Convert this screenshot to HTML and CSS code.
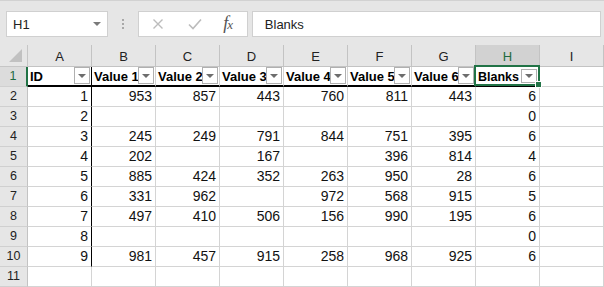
FILE: index.html
```html
<!DOCTYPE html>
<html>
<head>
<meta charset="utf-8">
<link rel="stylesheet" href="styles.css">
</head>
<body>
<div class="topbar">
  <div class="namebox"><span>H1</span><span class="dd"></span></div>
  <div class="grip"><i></i><i></i><i></i></div>
  <div class="fbtns">
    <svg class="ico" width="12" height="12" viewBox="0 0 12 12"><path d="M1.5 1.5 L10.5 10.5 M10.5 1.5 L1.5 10.5" stroke="#bcbcbc" stroke-width="1.4" fill="none"/></svg>
    <svg class="ico" width="14" height="12" viewBox="0 0 14 12"><path d="M1 6.5 L5 10.5 L13 1.5" stroke="#bcbcbc" stroke-width="1.6" fill="none"/></svg>
    <span class="fx">f<span>x</span></span>
  </div>
  <div class="formula">Blanks</div>
</div>
<div class="sheet">
  <div class="corner"><svg width="14" height="14" viewBox="0 0 14 14"><polygon points="13,0 13,13 0,13" fill="#c1c1c1"/></svg></div>
  <div class="ch">A</div><div class="ch">B</div><div class="ch">C</div><div class="ch">D</div><div class="ch">E</div><div class="ch">F</div><div class="ch">G</div><div class="ch on">H</div><div class="ch">I</div>

  <div class="rh on">1</div>
  <div class="c th ca"><span class="t">ID</span><span class="fb"></span></div>
  <div class="c th"><span class="t">Value 1</span><span class="fb"></span></div>
  <div class="c th"><span class="t">Value 2</span><span class="fb"></span></div>
  <div class="c th"><span class="t">Value 3</span><span class="fb"></span></div>
  <div class="c th"><span class="t">Value 4</span><span class="fb"></span></div>
  <div class="c th"><span class="t">Value 5</span><span class="fb"></span></div>
  <div class="c th"><span class="t">Value 6</span><span class="fb"></span></div>
  <div class="c th cur"><span class="t">Blanks</span><span class="fb"></span><span class="sel"><span class="handle"></span></span></div>
  <div class="c"></div>

  <div class="rh">2</div>
  <div class="c n ca">1</div><div class="c n">953</div><div class="c n">857</div><div class="c n">443</div><div class="c n">760</div><div class="c n">811</div><div class="c n">443</div><div class="c n">6</div><div class="c"></div>

  <div class="rh">3</div>
  <div class="c n ca">2</div><div class="c n"></div><div class="c n"></div><div class="c n"></div><div class="c n"></div><div class="c n"></div><div class="c n"></div><div class="c n">0</div><div class="c"></div>

  <div class="rh">4</div>
  <div class="c n ca">3</div><div class="c n">245</div><div class="c n">249</div><div class="c n">791</div><div class="c n">844</div><div class="c n">751</div><div class="c n">395</div><div class="c n">6</div><div class="c"></div>

  <div class="rh">5</div>
  <div class="c n ca">4</div><div class="c n">202</div><div class="c n"></div><div class="c n">167</div><div class="c n"></div><div class="c n">396</div><div class="c n">814</div><div class="c n">4</div><div class="c"></div>

  <div class="rh">6</div>
  <div class="c n ca">5</div><div class="c n">885</div><div class="c n">424</div><div class="c n">352</div><div class="c n">263</div><div class="c n">950</div><div class="c n">28</div><div class="c n">6</div><div class="c"></div>

  <div class="rh">7</div>
  <div class="c n ca">6</div><div class="c n">331</div><div class="c n">962</div><div class="c n"></div><div class="c n">972</div><div class="c n">568</div><div class="c n">915</div><div class="c n">5</div><div class="c"></div>

  <div class="rh">8</div>
  <div class="c n ca">7</div><div class="c n">497</div><div class="c n">410</div><div class="c n">506</div><div class="c n">156</div><div class="c n">990</div><div class="c n">195</div><div class="c n">6</div><div class="c"></div>

  <div class="rh">9</div>
  <div class="c n ca">8</div><div class="c n"></div><div class="c n"></div><div class="c n"></div><div class="c n"></div><div class="c n"></div><div class="c n"></div><div class="c n">0</div><div class="c"></div>

  <div class="rh">10</div>
  <div class="c n ca">9</div><div class="c n">981</div><div class="c n">457</div><div class="c n">915</div><div class="c n">258</div><div class="c n">968</div><div class="c n">925</div><div class="c n">6</div><div class="c"></div>

  <div class="rh">11</div>
  <div class="c"></div><div class="c"></div><div class="c"></div><div class="c"></div><div class="c"></div><div class="c"></div><div class="c"></div><div class="c"></div><div class="c"></div>
</div>
</body>
</html>
```

FILE: styles.css
```css
* { box-sizing: border-box; }
html, body { margin: 0; padding: 0; }
body {
  width: 604px;
  height: 287px;
  overflow: hidden;
  background: #ffffff;
  font-family: "Liberation Sans", Arial, sans-serif;
  color: #000;
}

/* ---------- formula bar ---------- */
.topbar {
  height: 45px;
  background: #e6e6e6;
  border-top: 1px solid #d2d2d2;
  display: flex;
  align-items: flex-start;
  padding: 10px 3px 0 6px;
}
.namebox {
  width: 102px;
  height: 26px;
  background: #fff;
  border: 1px solid #d0d0d0;
  display: flex;
  align-items: center;
  justify-content: space-between;
  padding: 0 6px 0 6px;
  font-size: 13px;
  color: #222;
}
.dd {
  width: 0; height: 0;
  border-left: 4px solid transparent;
  border-right: 4px solid transparent;
  border-top: 4px solid #7a7a7a;
}
.grip {
  width: 31px;
  height: 26px;
  display: flex;
  flex-direction: column;
  align-items: center;
  justify-content: center;
  gap: 2px;
}
.grip i {
  display: block;
  width: 2px;
  height: 2px;
  background: #a8a8a8;
}
.fbtns {
  width: 110px;
  height: 26px;
  background: #fff;
  border: 1px solid #d0d0d0;
  display: flex;
  align-items: center;
  padding: 0 0 0 13px;
}
.fbtns .ico:first-child { margin-right: 24px; }
.fbtns .ico:nth-child(2) { margin-right: 21px; }
.fx {
  font-family: "Liberation Serif", "Times New Roman", serif;
  font-style: italic;
  font-size: 18px;
  line-height: 20px;
  color: #555;
  letter-spacing: -1px;
}
.fx span { font-size: 13px; }
.formula {
  margin-left: 4px;
  width: 351px;
  height: 26px;
  background: #fff;
  border: 1px solid #d0d0d0;
  font-size: 13px;
  color: #222;
  display: flex;
  align-items: center;
  padding-left: 12px;
}

/* ---------- sheet grid ---------- */
.sheet {
  display: grid;
  grid-template-columns: 28px repeat(9, 64px);
  grid-template-rows: 22px repeat(11, 20px);
}
.corner {
  background: #e6e6e6;
  border-right: 1px solid #c6c6c6;
  border-bottom: 1px solid #c6c6c6;
  display: flex;
  align-items: flex-end;
  justify-content: flex-end;
  padding: 0 4px 3px 0;
}
.ch {
  background: #e6e6e6;
  border-right: 1px solid #c3c3c3;
  border-bottom: 1px solid #c3c3c3;
  font-size: 13px;
  line-height: 18px;
  padding-top: 3px;
  text-align: center;
  color: #222;
}
.ch.on {
  background: #d2d2d2;
  color: #1f6b41;
}
.rh {
  background: #e6e6e6;
  border-right: 1px solid #c3c3c3;
  border-bottom: 1px solid #d0d0d0;
  font-size: 12.5px;
  line-height: 19px;
  text-align: center;
  color: #222;
}
.rh.on {
  background: #dcdcdc;
  color: #1f6b41;
  border-right: 2px solid #217346;
}
.c {
  border-right: 1px solid #d4d4d4;
  border-bottom: 1px solid #d4d4d4;
  font-size: 14px;
  line-height: 19px;
  white-space: nowrap;
  overflow: hidden;
  color: #111;
}
.n {
  text-align: right;
  padding-right: 3px;
}
.ca { border-right-color: #000; }
.th {
  display: flex;
  align-items: flex-start;
  border-bottom: 2px solid #000;
  font-weight: bold;
  font-size: 13px;
  line-height: 18px;
  overflow: visible;
  color: #000;
}
.th .t {
  flex: 1;
  min-width: 0;
  overflow: hidden;
  padding-left: 2px;
  padding-top: 1px;
}
.fb {
  flex-shrink: 0;
  width: 16px;
  height: 17px;
  margin-right: 1px;
  background: #fff;
  border: 1px solid #b0b0b0;
  display: flex;
  align-items: center;
  justify-content: center;
}
.fb::after {
  content: "";
  width: 0; height: 0;
  border-left: 4px solid transparent;
  border-right: 4px solid transparent;
  border-top: 4px solid #6d6d6d;
}
.cur {
  position: relative;
  border-right-color: #d4d4d4;
}
.cur .t { font-size: 12.5px; }
.cur .fb {
  height: 14px;
  margin-top: 2px;
  margin-right: 2px;
}
.sel {
  position: absolute;
  top: -2px;
  left: -2px;
  right: -1px;
  bottom: -1px;
  border: 2px solid #217346;
  z-index: 2;
}
.handle {
  position: absolute;
  right: -4px;
  bottom: -4px;
  width: 7px;
  height: 7px;
  background: #217346;
  border: 1px solid #fff;
}
```
